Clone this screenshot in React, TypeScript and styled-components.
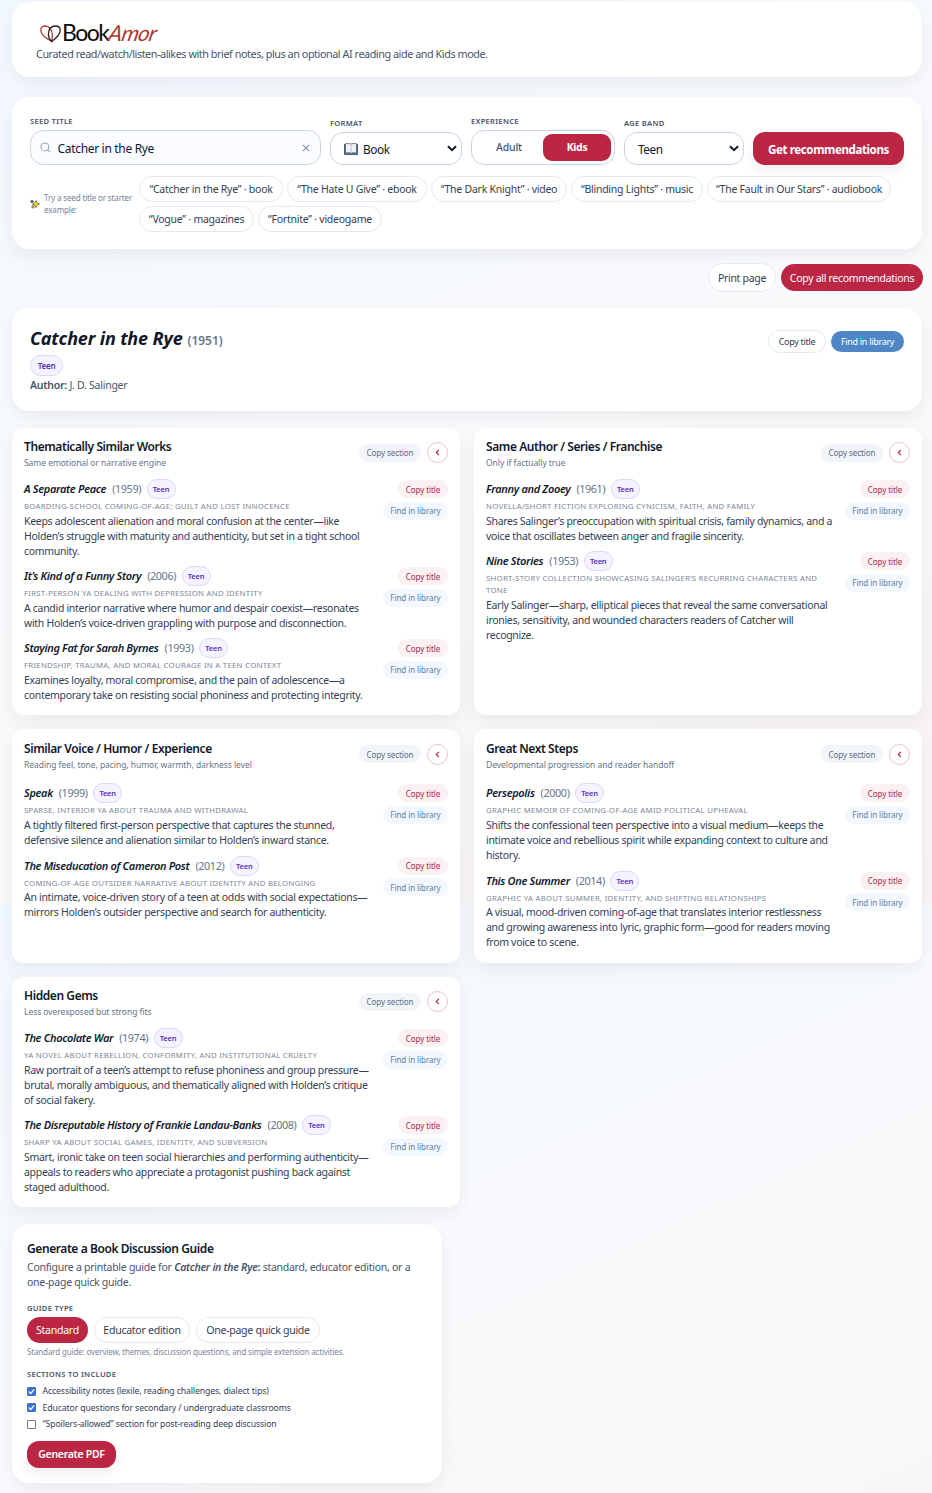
import React from "react";
import styled, { createGlobalStyle, css } from "styled-components";

const Global = createGlobalStyle`
  * { box-sizing: border-box; }
  body {
    margin: 0;
    font-family: "Noto Sans", "Open Sans", sans-serif;
    color: #0f172a;
    background: linear-gradient(155deg, #f2f8ff 0%, #f9fafc 50%, #f9f3f4 100%) 0 0 / 100% 903px repeat-y;
  }
  button, input, select { font: inherit; letter-spacing: inherit; margin: 0; }
`;

const Page = styled.main`
  width: 932px;
  height: 1493px;
  padding: 2px 10px 0 12px;
  overflow: hidden;
`;

const Panel = styled.section`
  background: #fff;
  border-radius: 18px;
  box-shadow: 0 7px 18px rgba(15, 23, 42, 0.06);
`;

const Header = styled(Panel)`
  height: 75px;
  padding: 19px 24px 0;
`;

const Logo = styled.div`
  display: flex;
  align-items: center;
  height: 25px;
  padding-left: 4px;
`;

const LogoBook = styled.span`
  font: 400 23px/23px Lato, sans-serif;
  letter-spacing: -1.5px;
  color: #0b0b0b;
  margin: -2px 0 0 1px;
`;

const LogoAmor = styled.span`
  font: italic 400 22px/23px Lato, sans-serif;
  letter-spacing: -0.7px;
  color: #b03a34;
  transform: skewX(-12deg);
  margin: -2px 0 0 1px;
`;

const Tagline = styled.p`
  margin: 0;
  font-size: 10.8px;
  line-height: 16px;
  letter-spacing: -0.44px;
  color: #475569;
  white-space: nowrap;
`;

const SearchPanel = styled(Panel)`
  height: 152px;
  margin-top: 20px;
  padding: 18px;
`;

const FormRow = styled.div`
  display: grid;
  grid-template-columns: 291px 132px 144px 120px 151px;
  gap: 9px;
  align-items: end;
  height: 50px;
`;

const Label = styled.div`
  font-size: 7.6px;
  font-weight: 600;
  line-height: 11px;
  letter-spacing: 0.28px;
  color: #475569;
  text-transform: uppercase;
  margin-bottom: 3.5px;
`;

const fieldBox = css`
  display: flex;
  align-items: center;
  border: 1px solid #cbd5e6;
  border-radius: 13px;
  background: #fff;
`;

const SeedBox = styled.div`
  ${fieldBox}
  height: 35px;
  padding: 0 10px 0 9px;
  background: #fafcff;
`;

const SeedInput = styled.input`
  flex: 1;
  min-width: 0;
  border: 0;
  outline: 0;
  padding: 2px 0 0;
  margin-left: 6.5px;
  background: transparent;
  font-size: 12px;
  letter-spacing: -0.32px;
  color: #0f172a;
`;

const SelectBox = styled.div`
  ${fieldBox}
  height: 33px;
  padding: 0 4px 0 13px;
  font-size: 11.8px;
  letter-spacing: -0.4px;
  gap: 5px;
  span { flex: 1; padding-top: 1px; }
`;

const Toggle = styled.div`
  ${fieldBox}
  height: 35px;
  padding: 3px;
`;

const ToggleOption = styled.button<{ $on?: boolean }>`
  flex: 1;
  height: 27px;
  border: 0;
  padding: 0 0 1px;
  border-radius: 9px;
  font-size: 10.5px;
  letter-spacing: ${(p) => (p.$on ? -0.35 : -0.2)}px;
  font-weight: ${(p) => (p.$on ? 700 : 500)};
  color: ${(p) => (p.$on ? "#fff" : "#475569")};
  background: ${(p) => (p.$on ? "#bb2645" : "transparent")};
`;

const Submit = styled.button`
  height: 33px;
  border: 0;
  border-radius: 12px;
  background: #bb2645;
  color: #fff;
  font-size: 11.6px;
  font-weight: 700;
  letter-spacing: -0.42px;
  padding: 2px 0 0;
  box-shadow: 0 7px 14px rgba(15, 23, 42, 0.06);
`;

const Starters = styled.div`
  display: flex;
  align-items: center;
  margin-top: 11px;
`;

const StarterHint = styled.div`
  display: flex;
  align-items: center;
  width: 109px;
  gap: 4px;
  font-size: 8px;
  line-height: 12px;
  letter-spacing: -0.14px;
  color: #75839a;
  white-space: nowrap;
`;

const Chips = styled.div`
  display: flex;
  flex: 1;
  flex-wrap: wrap;
  gap: 4px;
`;

const Chip = styled.button<{ $w: number }>`
  width: ${(p) => p.$w}px;
  height: 26px;
  padding: 0;
  border: 1px solid #e5eaf3;
  border-radius: 13px;
  background: #fff;
  font-size: 10.5px;
  letter-spacing: -0.25px;
  color: #334155;
  white-space: nowrap;
`;

const Actions = styled.div`
  display: flex;
  justify-content: flex-end;
  align-items: center;
  gap: 5px;
  height: 29px;
  margin: 14px -1px 0 0;
`;

const PillButton = styled.button<{ $w: number; $h: number; $fs: number; $tone?: "red" | "blue" }>`
  width: ${(p) => p.$w}px;
  height: ${(p) => p.$h}px;
  padding: 0;
  border-radius: 15px;
  border: ${(p) => (p.$tone ? "0" : "1px solid #e5eaf3")};
  background: ${(p) => (p.$tone === "red" ? "#bb2645" : p.$tone === "blue" ? "#4f86c6" : "#fff")};
  color: ${(p) => (p.$tone ? "#fff" : "#334155")};
  font-size: ${(p) => p.$fs}px;
  letter-spacing: -0.3px;
  white-space: nowrap;
`;

const WorkPanel = styled(Panel)`
  display: flex;
  justify-content: space-between;
  height: 103px;
  margin-top: 16px;
  padding: 20px 18px 0;
`;

const WorkTitle = styled.h1`
  margin: -1px 0 0;
  font-size: 18px;
  line-height: 22px;
  font-style: italic;
  font-weight: 700;
  letter-spacing: -0.16px;
  white-space: nowrap;
  small {
    margin-left: 5px;
    font-size: 12px;
    font-style: normal;
    font-weight: 600;
    letter-spacing: 0;
    color: #64748b;
  }
`;

const Teen = styled.span<{ $large?: boolean }>`
  display: inline-flex;
  align-items: center;
  justify-content: center;
  width: ${(p) => (p.$large ? 33 : 29)}px;
  height: ${(p) => (p.$large ? 21 : 20)}px;
  border: 1px solid #ddd6fe;
  border-radius: 11px;
  background: #f5f3ff;
  color: #5b2fb8;
  font-size: ${(p) => (p.$large ? 8 : 7.5)}px;
  font-weight: 600;
  letter-spacing: -0.2px;
`;

const WorkBadge = styled.div`
  display: flex;
  margin-top: 3px;
`;

const Author = styled.p`
  margin: 1px 0 0;
  font-size: 10.5px;
  line-height: 16px;
  letter-spacing: -0.25px;
  color: #475569;
  b { font-weight: 600; }
`;

const WorkButtons = styled.div`
  display: flex;
  align-items: center;
  gap: 5px;
  height: 27px;
`;

const Grid = styled.div`
  display: grid;
  grid-template-columns: 448px 448px;
  grid-template-rows: 287px 234px 230px;
  gap: 14px;
  margin-top: 17px;
`;

const Card = styled(Panel)<{ $tall?: boolean }>`
  border-radius: 12px;
  padding: ${(p) => (p.$tall ? 10.5 : 10)}px 12px 0;
  article { margin-bottom: ${(p) => (p.$tall ? 8.2 : 7.5)}px; }
`;

const CardHead = styled.header<{ $tall?: boolean }>`
  display: flex;
  justify-content: space-between;
  height: ${(p) => (p.$tall ? 43.7 : 41)}px;
`;

const CardTitle = styled.h2`
  margin: 0;
  font-size: 12px;
  line-height: 18px;
  font-weight: 600;
  letter-spacing: -0.42px;
  white-space: nowrap;
`;

const CardSub = styled.p`
  margin: 0;
  font-size: 8.5px;
  line-height: 14px;
  letter-spacing: -0.05px;
  color: #64748b;
`;

const HeadTools = styled.div`
  display: flex;
  align-items: center;
  gap: 6px;
  height: 21px;
  margin-top: 4px;
`;

const SoftPill = styled.button<{ $w: number; $kind: "section" | "title" | "library" }>`
  width: ${(p) => p.$w}px;
  height: 18px;
  border: 0;
  border-radius: 9px;
  padding: 0;
  font-size: 8px;
  letter-spacing: -0.07px;
  white-space: nowrap;
  color: ${(p) => ({ section: "#5b6b82", title: "#a82b48", library: "#5f7ba3" })[p.$kind]};
  background: ${(p) => ({ section: "#f1f5f9", title: "#fbf0f2", library: "#f2f8fe" })[p.$kind]};
`;

const Collapse = styled.button`
  display: flex;
  align-items: center;
  justify-content: center;
  width: 21px;
  height: 21px;
  padding: 0;
  border: 1px solid #eebfc8;
  border-radius: 50%;
  background: #fff;
  color: #bb2645;
`;

const Item = styled.article`
  display: flex;
  justify-content: space-between;
`;

const ItemText = styled.div`
  width: 354px;
  margin-right: -2px;
`;

const ItemTitle = styled.div`
  display: flex;
  align-items: center;
  height: 20px;
  font-size: 11px;
  white-space: nowrap;
  em, i { padding-bottom: 1.5px; }
  em { font-weight: 600; letter-spacing: -0.34px; }
  i { font-style: normal; font-size: 10.8px; color: #64748b; margin: 0 5.5px 0 6px; letter-spacing: -0.38px; }
`;

const Meta = styled.div`
  margin-top: 1px;
  font-size: 7.8px;
  line-height: 12px;
  letter-spacing: 0.26px;
  color: #7b8798;
  text-transform: uppercase;
`;

const Desc = styled.p`
  margin: 1.5px 0 0;
  font-size: 10.5px;
  line-height: 15px;
  letter-spacing: -0.305px;
  color: #334155;
`;

const ItemTools = styled.div`
  display: flex;
  flex-direction: column;
  align-items: flex-end;
  gap: 3.5px;
  padding-top: 1px;
`;

const Guide = styled(Panel)`
  width: 430px;
  height: 259px;
  margin-top: 17px;
  padding: 16px 15px 0;
`;

const GuideText = styled.p`
  margin: 2px 0 13px;
  font-size: 10.5px;
  line-height: 15px;
  letter-spacing: -0.26px;
  color: #475569;
  b { font-weight: 600; }
`;

const GuideTypes = styled.div`
  display: flex;
  gap: 6px;
  margin-top: -1px;
`;

const GuideHint = styled.p`
  margin: 3px 0 11px;
  font-size: 8px;
  line-height: 12px;
  letter-spacing: -0.15px;
  color: #7b8798;
`;

const Check = styled.label`
  display: flex;
  align-items: center;
  gap: 6.5px;
  height: 16.5px;
  font-size: 8.7px;
  letter-spacing: -0.11px;
  color: #334155;
`;

const Generate = styled.button`
  display: block;
  width: 89px;
  height: 27px;
  margin-top: 8px;
  padding: 0;
  border: 0;
  border-radius: 12px;
  background: #bb2645;
  color: #fff;
  font-size: 10.5px;
  font-weight: 600;
  letter-spacing: -0.3px;
  box-shadow: 0 7px 14px rgba(15, 23, 42, 0.06);
`;

const HeartMark = () => (
  <svg width="21" height="18" viewBox="0 0 21 18" fill="none" strokeWidth="1.3" strokeLinecap="round">
    <path d="M12 16.5C5 13 .8 9 .8 5 .8 2.500 2.600 1 5 1c4.500 0 7.300 4 7.300 9 0 2.500-.3 4.500-.3 6.500z" stroke="#b03a34" />
    <path d="M11.500 16.500C9.200 14 8.300 11 8.500 8.500 8.800 4 11.500 1 15.500 1c2.700 0 4.700 1.600 4.700 4.200 0 3.600-3.200 7.500-8.700 11.300z" stroke="#222" />
  </svg>
);

const SearchIcon = () => (
  <svg width="11" height="11" viewBox="0 0 11 11" fill="none" stroke="#94a3b8" strokeWidth="1.1" strokeLinecap="round">
    <circle cx="4.900" cy="4.900" r="3.900" />
    <path d="M7.900 7.900 9.700 9.700" />
  </svg>
);

const ClearIcon = () => (
  <svg width="8" height="8" viewBox="0 0 8 8" stroke="#8391a8" strokeWidth="1.1">
    <path d="M.8.8l6.400 6.400M7.200.8L.8 7.200" />
  </svg>
);

const Chevron = () => (
  <svg width="10" height="7" viewBox="0 0 10 7" fill="none" stroke="#0f172a" strokeWidth="2">
    <path d="M1 1.200l4 4 4-4" />
  </svg>
);

const BookIcon = () => (
  <svg width="14" height="12" viewBox="0 0 14 12">
    <path d="M.5 1.500h13v10H.5z" fill="#5b86b8" stroke="#27415f" strokeWidth=".8" />
    <path d="M1.500 .6h4.700l.8.700.8-.7h4.700v9.200H8l-1 .7-1-.7H1.500z" fill="#f1f2f4" stroke="#3a3a3a" strokeWidth=".6" />
    <path d="M7 1.500v8.500" stroke="#9a9a9a" strokeWidth=".6" />
  </svg>
);

const Sparkles = () => (
  <svg width="10" height="10" viewBox="0 0 10 10" stroke="#2b2b18" strokeWidth=".5">
    <path d="M6 1.500l1.200 2.400L9.700 5 7.200 6.200 6 8.700 4.800 6.200 2.300 5l2.500-1.100z" fill="#f6dc1c" />
    <path d="M2 .8l.7 1.100 1.300.6-1.300.6L2 4.200 1.300 3.100.2 2.500l1.100-.6z" fill="#3c7f86" />
    <path d="M3 6.300l.6 1 1 .6-1 .5-.6 1-.6-1-1-.5 1-.6z" fill="#d8b41a" />
  </svg>
);

const BackIcon = () => (
  <svg width="5" height="7" viewBox="0 0 5 7" fill="none" stroke="currentColor" strokeWidth="1.200">
    <path d="M3.900 .8L1.300 3.500l2.600 2.700" />
  </svg>
);

const Tick = styled.span<{ $on?: boolean }>`
  display: flex;
  width: 9px;
  height: 9px;
  border-radius: 1px;
  border: 1px solid ${(p) => (p.$on ? "#3b72d0" : "#767676")};
  background: ${(p) => (p.$on ? "#3b72d0" : "#fff")};
`;

const CheckMark = () => (
  <svg width="7" height="7" viewBox="0 0 7 7" fill="none" stroke="#fff" strokeWidth="1.300">
    <path d="M.8 3.600l1.900 1.900L6.200 1.300" />
  </svg>
);

type Work = { title: string; year: number; meta: string; desc: string };
type Section = { title: string; sub: string; tall?: boolean; works: Work[] };

const sections: Section[] = [
  {
    title: "Thematically Similar Works",
    sub: "Same emotional or narrative engine",
    works: [
      { title: "A Separate Peace", year: 1959, meta: "Boarding-school coming-of-age; guilt and lost innocence", desc: "Keeps adolescent alienation and moral confusion at the center—like Holden’s struggle with maturity and authenticity, but set in a tight school community." },
      { title: "It’s Kind of a Funny Story", year: 2006, meta: "First-person YA dealing with depression and identity", desc: "A candid interior narrative where humor and despair coexist—resonates with Holden’s voice-driven grappling with purpose and disconnection." },
      { title: "Staying Fat for Sarah Byrnes", year: 1993, meta: "Friendship, trauma, and moral courage in a teen context", desc: "Examines loyalty, moral compromise, and the pain of adolescence—a contemporary take on resisting social phoniness and protecting integrity." },
    ],
  },
  {
    title: "Same Author / Series / Franchise",
    sub: "Only if factually true",
    works: [
      { title: "Franny and Zooey", year: 1961, meta: "Novella/short fiction exploring cynicism, faith, and family", desc: "Shares Salinger’s preoccupation with spiritual crisis, family dynamics, and a voice that oscillates between anger and fragile sincerity." },
      { title: "Nine Stories", year: 1953, meta: "Short-story collection showcasing Salinger’s recurring characters and tone", desc: "Early Salinger—sharp, elliptical pieces that reveal the same conversational ironies, sensitivity, and wounded characters readers of Catcher will recognize." },
    ],
  },
  {
    title: "Similar Voice / Humor / Experience",
    sub: "Reading feel, tone, pacing, humor, warmth, darkness level",
    tall: true,
    works: [
      { title: "Speak", year: 1999, meta: "Sparse, interior YA about trauma and withdrawal", desc: "A tightly filtered first-person perspective that captures the stunned, defensive silence and alienation similar to Holden’s inward stance." },
      { title: "The Miseducation of Cameron Post", year: 2012, meta: "Coming-of-age outsider narrative about identity and belonging", desc: "An intimate, voice-driven story of a teen at odds with social expectations—mirrors Holden’s outsider perspective and search for authenticity." },
    ],
  },
  {
    title: "Great Next Steps",
    sub: "Developmental progression and reader handoff",
    tall: true,
    works: [
      { title: "Persepolis", year: 2000, meta: "Graphic memoir of coming-of-age amid political upheaval", desc: "Shifts the confessional teen perspective into a visual medium—keeps the intimate voice and rebellious spirit while expanding context to culture and history." },
      { title: "This One Summer", year: 2014, meta: "Graphic YA about summer, identity, and shifting relationships", desc: "A visual, mood-driven coming-of-age that translates interior restlessness and growing awareness into lyric, graphic form—good for readers moving from voice to scene." },
    ],
  },
  {
    title: "Hidden Gems",
    sub: "Less overexposed but strong fits",
    works: [
      { title: "The Chocolate War", year: 1974, meta: "YA novel about rebellion, conformity, and institutional cruelty", desc: "Raw portrait of a teen’s attempt to refuse phoniness and group pressure—brutal, morally ambiguous, and thematically aligned with Holden’s critique of social fakery." },
      { title: "The Disreputable History of Frankie Landau-Banks", year: 2008, meta: "Sharp YA about social games, identity, and subversion", desc: "Smart, ironic take on teen social hierarchies and performing authenticity—appeals to readers who appreciate a protagonist pushing back against staged adulthood." },
    ],
  },
];

const starters: [string, number][] = [
  ["“Catcher in the Rye” · book", 144],
  ["“The Hate U Give” · ebook", 140],
  ["“The Dark Knight” · video", 136],
  ["“Blinding Lights” · music", 132],
  ["“The Fault in Our Stars” · audiobook", 184],
  ["“Vogue” · magazines", 115],
  ["“Fortnite” · videogame", 124],
];

const options: [string, boolean][] = [
  ["Accessibility notes (lexile, reading challenges, dialect tips)", true],
  ["Educator questions for secondary / undergraduate classrooms", true],
  ["“Spoilers-allowed” section for post-reading deep discussion", false],
];

export default function App() {
  return (
    <>
      <Global />
      <Page>
        <Header as="header">
          <Logo>
            <HeartMark />
            <LogoBook>Book</LogoBook>
            <LogoAmor>Amor</LogoAmor>
          </Logo>
          <Tagline>Curated read/watch/listen-alikes with brief notes, plus an optional AI reading aide and Kids mode.</Tagline>
        </Header>

        <SearchPanel>
          <FormRow>
            <div>
              <Label>Seed title</Label>
              <SeedBox>
                <SearchIcon />
                <SeedInput defaultValue="Catcher in the Rye" />
                <ClearIcon />
              </SeedBox>
            </div>
            <div>
              <Label>Format</Label>
              <SelectBox>
                <BookIcon />
                <span>Book</span>
                <Chevron />
              </SelectBox>
            </div>
            <div>
              <Label>Experience</Label>
              <Toggle>
                <ToggleOption>Adult</ToggleOption>
                <ToggleOption $on>Kids</ToggleOption>
              </Toggle>
            </div>
            <div>
              <Label>Age band</Label>
              <SelectBox>
                <span>Teen</span>
                <Chevron />
              </SelectBox>
            </div>
            <Submit>Get recommendations</Submit>
          </FormRow>
          <Starters>
            <StarterHint>
              <Sparkles />
              <span>
                Try a seed title or starter
                <br />
                example:
              </span>
            </StarterHint>
            <Chips>
              {starters.map(([text, w]) => (
                <Chip key={text} $w={w}>{text}</Chip>
              ))}
            </Chips>
          </Starters>
        </SearchPanel>

        <Actions>
          <PillButton $w={68} $h={29} $fs={10.5}>Print page</PillButton>
          <PillButton $w={142} $h={27} $fs={10.5} $tone="red">Copy all recommendations</PillButton>
        </Actions>

        <WorkPanel>
          <div>
            <WorkTitle>Catcher in the Rye<small>(1951)</small></WorkTitle>
            <WorkBadge><Teen $large>Teen</Teen></WorkBadge>
            <Author><b>Author:</b> J. D. Salinger</Author>
          </div>
          <WorkButtons>
            <PillButton $w={58} $h={23} $fs={9}>Copy title</PillButton>
            <PillButton $w={73} $h={21} $fs={9} $tone="blue">Find in library</PillButton>
          </WorkButtons>
        </WorkPanel>

        <Grid>
          {sections.map((s) => (
            <Card key={s.title} $tall={s.tall}>
              <CardHead $tall={s.tall}>
                <div>
                  <CardTitle>{s.title}</CardTitle>
                  <CardSub>{s.sub}</CardSub>
                </div>
                <HeadTools>
                  <SoftPill $w={62} $kind="section">Copy section</SoftPill>
                  <Collapse><BackIcon /></Collapse>
                </HeadTools>
              </CardHead>
              {s.works.map((w) => (
                <Item key={w.title}>
                  <ItemText>
                    <ItemTitle>
                      <em>{w.title}</em>
                      <i>({w.year})</i>
                      <Teen>Teen</Teen>
                    </ItemTitle>
                    <Meta>{w.meta}</Meta>
                    <Desc>{w.desc}</Desc>
                  </ItemText>
                  <ItemTools>
                    <SoftPill $w={50} $kind="title">Copy title</SoftPill>
                    <SoftPill $w={65} $kind="library">Find in library</SoftPill>
                  </ItemTools>
                </Item>
              ))}
            </Card>
          ))}
        </Grid>

        <Guide>
          <CardTitle>Generate a Book Discussion Guide</CardTitle>
          <GuideText>
            Configure a printable guide for <b><em>Catcher in the Rye</em>:</b> standard, educator edition, or a one-page quick guide.
          </GuideText>
          <Label>Guide type</Label>
          <GuideTypes>
            <PillButton $w={61} $h={26} $fs={10.6} $tone="red">Standard</PillButton>
            <PillButton $w={96} $h={26} $fs={10.6}>Educator edition</PillButton>
            <PillButton $w={124} $h={26} $fs={10.6}>One-page quick guide</PillButton>
          </GuideTypes>
          <GuideHint>Standard guide: overview, themes, discussion questions, and simple extension activities.</GuideHint>
          <Label>Sections to include</Label>
          {options.map(([text, on]) => (
            <Check key={text}>
              <Tick $on={on}>{on && <CheckMark />}</Tick>
              {text}
            </Check>
          ))}
          <Generate>Generate PDF</Generate>
        </Guide>
      </Page>
    </>
  );
}
